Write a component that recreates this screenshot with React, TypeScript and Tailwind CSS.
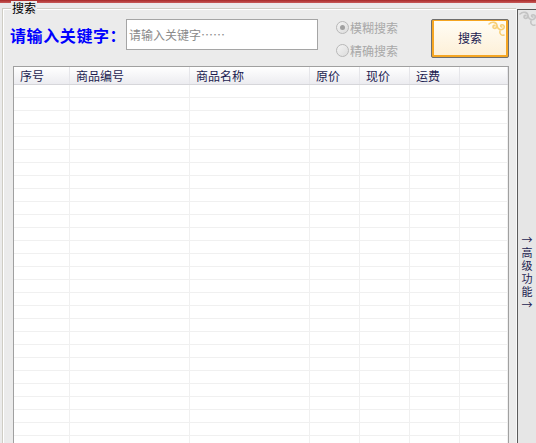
import React from "react";

const font = { fontFamily: '"Noto Sans CJK SC", "Noto Sans", sans-serif' };

const columns = [
  { name: "序号", w: "w-[56px]" },
  { name: "商品编号", w: "w-[120px]" },
  { name: "商品名称", w: "w-[120px]" },
  { name: "原价", w: "w-[50px]" },
  { name: "现价", w: "w-[50px]" },
  { name: "运费", w: "w-[50px]" },
  { name: "", w: "flex-1" },
];

const Swirl = ({ color }: { color: string }) => (
  <svg width="18" height="16" viewBox="0 0 18 16" fill="none" stroke={color} strokeWidth="1.6" strokeLinecap="round">
    <path d="M1 3 C4 0 9 1 9 5 C9 8 5 8 5 6 C5 4 7 4 7 5" />
    <path d="M9 5 C10 9 14 10 16 7 C17 5 15 3 13 4 C12 5 13 6 14 6" />
    <path d="M12 10 C11 13 14 15 16 14" />
  </svg>
);

const Radio = ({ checked, label }: { checked?: boolean; label: string }) => (
  <div className="flex items-center gap-[1px] h-[15px]">
    <span className="w-[13px] h-[13px] rounded-full border border-[#b8b8b8] bg-gradient-to-br from-[#f4f4f4] to-[#dcdcdc] flex items-center justify-center">
      {checked && <span className="w-[5px] h-[5px] rounded-full bg-[#a0a0a0]" />}
    </span>
    <span className="text-[12px] leading-[15px] text-[#a8a8a8]">{label}</span>
  </div>
);

export default function App() {
  return (
    <div className="w-[536px] h-[443px] bg-[#ebebeb] overflow-hidden" style={font}>
      <div className="h-[3px] bg-gradient-to-b from-[#a82828] to-[#c85a5a]" />
      <div className="flex h-[440px]">
        {/* search group */}
        <div className="flex-1 pl-[2px] pt-[5px]">
          <div className="relative h-full border-l border-t border-[#cfcdc4] shadow-[inset_1px_1px_0_#ffffff]">
            <span className="absolute -top-[8px] left-[8px] px-[1px] bg-[#ebebeb] text-[12px] leading-[14px] text-black">
              搜索
            </span>
            <div className="flex items-start pt-[10px] pl-[7px]">
              <div className="h-[31px] w-[116px] shrink-0 whitespace-nowrap flex items-center text-[16px] font-bold text-[#0000ff] leading-none tracking-[0.6px]">
                请输入关键字：
              </div>
              <div className="w-[192px] h-[31px] shrink-0 bg-white border border-[#a5a5a5] flex items-center pl-[2px] text-[12px] text-[#8a8a8a]">
                请输入关键字……
              </div>
              <div className="ml-[18px] pt-[1px] flex flex-col gap-[8px]">
                <Radio checked label="模糊搜索" />
                <Radio label="精确搜索" />
              </div>
              <button className="ml-[33px] relative w-[78px] h-[39px] shrink-0 border border-[#6e6e6e] rounded-[2px] bg-[#f5a623] p-[2px] pt-[1px]">
                <div className="relative w-full h-full bg-gradient-to-b from-[#fffdf5] to-[#fdf0d8] flex items-center justify-center text-[12px] text-[#202050]">
                  搜索
                  <span className="absolute top-[0px] right-[0px]">
                    <Swirl color="#f8d078" />
                  </span>
                </div>
              </button>
            </div>
            {/* table */}
            <div className="ml-[10px] mt-[8px] w-[496px] h-[400px] border-l border-r border-t border-[#a0a0a0] bg-white overflow-hidden">
              <div className="flex h-[18px] bg-gradient-to-b from-[#ffffff] to-[#ececf0] border-b border-[#d6d6da]">
                {columns.map((c, i) => (
                  <div
                    key={i}
                    className={`${c.w} h-full border-r border-[#e6e6ea] pl-[6px] text-[12px] leading-[17px] text-[#1c1c50]`}
                  >
                    {c.name}
                  </div>
                ))}
              </div>
              {Array.from({ length: 28 }).map((_, r) => (
                <div key={r} className="flex h-[13px] border-b border-[#f0f0f0]">
                  {columns.map((c, i) => (
                    <div key={i} className={`${c.w} h-full border-r border-[#f0f0f0]`} />
                  ))}
                </div>
              ))}
            </div>
          </div>
        </div>
        {/* side panel */}
        <div className="w-[20px] mt-[6px] border-l border-[#f8f8f8]">
          <div className="h-full border-l border-t border-[#5a5a5a] bg-[#e6e6e6] relative">
            <span className="absolute top-[1px] left-[1px]">
              <Swirl color="#c4c4c4" />
            </span>
            <div className="pt-[224px] flex justify-center">
              <span className="[writing-mode:vertical-rl] [text-orientation:upright] text-[11px] leading-[14px] tracking-[2px] text-[#1c1c50]">
                →高级功能→
              </span>
            </div>
          </div>
        </div>
      </div>
    </div>
  );
}
